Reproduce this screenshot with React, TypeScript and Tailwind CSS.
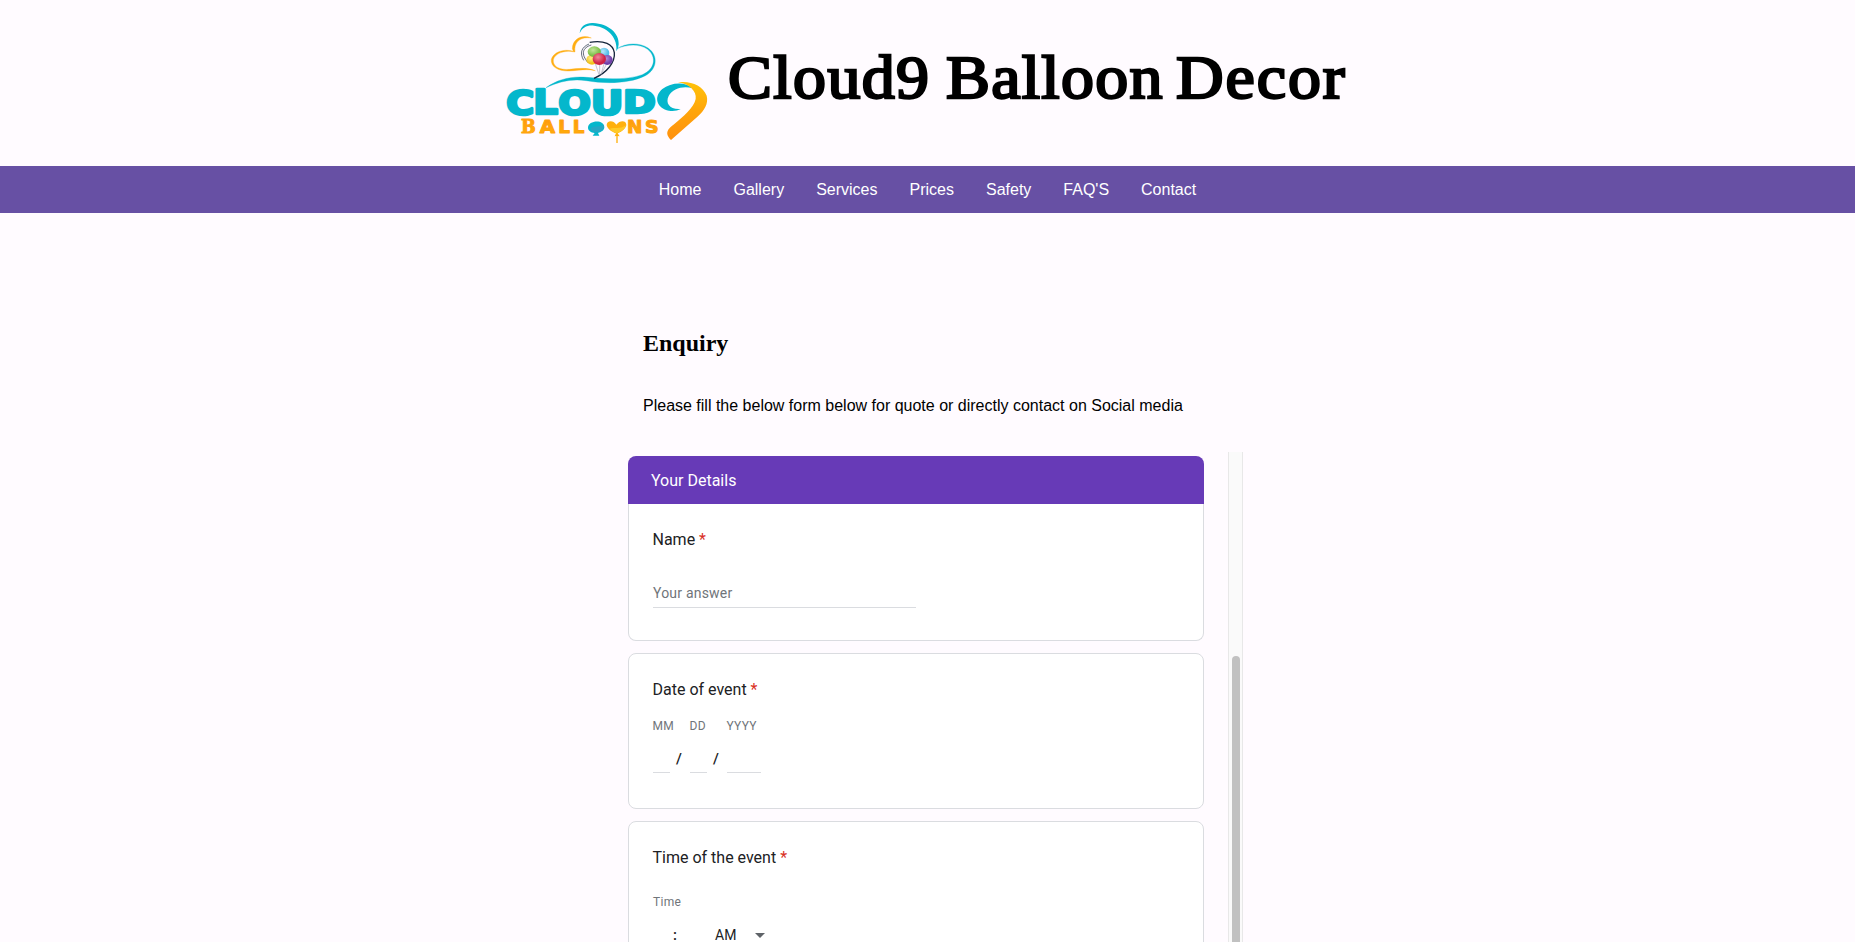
import React from "react";

const navItems = ["Home", "Gallery", "Services", "Prices", "Safety", "FAQ'S", "Contact"];

function Logo() {
  return (
    <svg viewBox="0 0 675 435" className="block h-[145px] w-[225px] shrink-0" aria-label="Cloud 9 Balloons">
      <defs>
        <linearGradient id="ribbon" x1="0" y1="0" x2="0" y2="1">
          <stop offset="0" stopColor="#ffc20a" />
          <stop offset="0.5" stopColor="#ffa50a" />
          <stop offset="1" stopColor="#ff900f" />
        </linearGradient>
        <linearGradient id="gold" x1="0" y1="0" x2="0" y2="1">
          <stop offset="0" stopColor="#ff960c" />
          <stop offset="1" stopColor="#ffb30c" />
        </linearGradient>
        <radialGradient id="green" cx="0.4" cy="0.35"><stop offset="0" stopColor="#c3e59a" /><stop offset="1" stopColor="#7cbf48" /></radialGradient>
        <radialGradient id="blue" cx="0.4" cy="0.35"><stop offset="0" stopColor="#b8e8fa" /><stop offset="1" stopColor="#53bde8" /></radialGradient>
        <radialGradient id="red" cx="0.4" cy="0.35"><stop offset="0" stopColor="#f0879a" /><stop offset="1" stopColor="#cf2345" /></radialGradient>
        <radialGradient id="purple" cx="0.4" cy="0.35"><stop offset="0" stopColor="#b48ad8" /><stop offset="1" stopColor="#7140a8" /></radialGradient>
        <radialGradient id="yellow" cx="0.4" cy="0.35"><stop offset="0" stopColor="#fff08a" /><stop offset="1" stopColor="#f2c21c" /></radialGradient>
      </defs>
      <path d="M254 70 C256 48 273 38 294 39 C341 41 373 70 371 103 C370 111 368 118 364 124 C369 88 343 52 297 47 C276 45 262 52 254 70Z" fill="#04b7cc" />
      <path d="M366 116 C391 99 432 96 459 114 C491 136 487 178 451 197 C405 221 332 222 274 212 C231 205 192 215 153 233 C188 208 228 198 275 202 C332 208 399 210 442 194 C480 178 486 141 458 118 C433 100 396 103 366 116Z" fill="#04b7cc" stroke="#04b7cc" strokeWidth="1" />
      <path d="M289 84 C263 72 232 86 232 116 L235 124 C205 114 174 128 169 148 C166 171 191 184 222 183 C253 181 276 176 301 182 C277 172 251 175 223 178 C192 180 173 169 175 149 C180 131 207 119 240 126 C236 98 254 79 289 84Z" fill="#ffad12" stroke="#ffad12" strokeWidth="1" />
      <path d="M284 97 C328 90 354 102 358 128 C361 157 336 188 297 205" fill="none" stroke="#17263c" strokeWidth="4" />
      <path d="M282 102 C258 112 254 130 266 151 M289 105 C262 113 257 132 279 158" fill="none" stroke="#17263c" strokeWidth="2" />
      <path d="M300 158 L312 194 M314 163 L314 194 M328 158 L318 194 M338 156 L321 188" fill="none" stroke="#a8abb8" strokeWidth="2" />
      <circle cx="327" cy="129" r="16" fill="url(#blue)" />
      <ellipse cx="291" cy="149" rx="17" ry="15" fill="url(#yellow)" />
      <ellipse cx="337" cy="150" rx="16" ry="15" fill="url(#purple)" />
      <ellipse cx="298" cy="125" rx="20" ry="16" fill="url(#green)" />
      <ellipse cx="313" cy="147" rx="20" ry="18" fill="url(#red)" />
      <g fontFamily="'DejaVu Sans', sans-serif" fontWeight="700" fill="#04b7cc" stroke="#04b7cc" strokeWidth="8" strokeLinejoin="round" fontSize="102">
        <text x="34" y="314" textLength="84" lengthAdjust="spacingAndGlyphs">C</text>
        <text x="115" y="313" textLength="74" lengthAdjust="spacingAndGlyphs">L</text>
        <text x="190" y="314" textLength="98" lengthAdjust="spacingAndGlyphs">O</text>
        <text x="287" y="314" textLength="98" lengthAdjust="spacingAndGlyphs">U</text>
        <text x="384" y="309" textLength="98" lengthAdjust="spacingAndGlyphs" fontSize="95">D</text>
      </g>
      <g fontFamily="'DejaVu Serif', serif" fontWeight="700" fill="url(#gold)" stroke="#ffa30c" strokeWidth="3" strokeLinejoin="round" fontSize="54">
        <text x="78" y="370" textLength="44" lengthAdjust="spacingAndGlyphs">B</text>
      </g>
      <g fontFamily="'DejaVu Sans', sans-serif" fontWeight="700" fill="url(#gold)" stroke="#ffa30c" strokeWidth="3" strokeLinejoin="round" fontSize="52">
        <text x="134" y="370" textLength="46" lengthAdjust="spacingAndGlyphs">A</text>
        <text x="190" y="370" textLength="35" lengthAdjust="spacingAndGlyphs">L</text>
        <text x="233" y="370" textLength="35" lengthAdjust="spacingAndGlyphs">L</text>
        <text x="396" y="370" textLength="46" lengthAdjust="spacingAndGlyphs">N</text>
        <text x="450" y="370" textLength="41" lengthAdjust="spacingAndGlyphs">S</text>
      </g>
      <path d="M279 353 C279 331 328 327 328 352 C328 361 318 367 309 369 L313 377 L293 377 L299 369 C288 367 279 362 279 353Z" fill="#04b7cc" />
      <path d="M287 354 C301 346 313 352 327 344 C328 358 315 366 302 367 C292 365 286 360 287 354Z" fill="#27a5c4" />
      <path d="M364 344 C355 329 335 331 335 345 C336 356 350 365 363 370 L359 379 L364 378 L364 399 L368 399 L368 378 L374 379 L368 370 C382 364 394 353 394 344 C393 330 374 331 364 344Z" fill="#ffb00d" />
      <path d="M344 356 C359 352 374 359 393 346 C390 359 377 366 365 370 C356 367 349 362 344 356Z" fill="#ffc928" />
      <path d="M593 235 C573 214 527 217 502 237 C474 261 486 296 522 302 C535 304 548 302 557 297 C525 300 510 280 521 258 C533 235 566 226 593 235Z" fill="#04b7cc" />
      <path d="M549 217 C585 211 624 226 635 257 C641 282 628 300 609 319 L528 390 C520 382 514 373 518 363 C520 356 529 349 538 342 C564 321 597 293 602 267 C606 244 582 221 549 217Z" fill="url(#ribbon)" />
    </svg>
  );
}

function Question({ title, className, children }: { title: string; className: string; children: React.ReactNode }) {
  return (
    <section className={`border-[#dadce0] bg-white px-6 ${className}`}>
      <h3 className="-ml-[0.5px] text-[16px] leading-6 font-normal text-[#202124]">
        {title} <span className="text-[#d93025]">*</span>
      </h3>
      {children}
    </section>
  );
}

function DatePart({ label, width }: { label: string; width: string }) {
  return (
    <div className={width}>
      <div className="-ml-[0.5px] h-4 text-[12px] leading-4 tracking-[0.3px] whitespace-nowrap text-[#70757a]">{label}</div>
      <div className="h-[39px] border-b border-[#dadce0]" />
    </div>
  );
}

export default function App() {
  return (
    <div className="flex h-[942px] w-full flex-col overflow-hidden bg-[#fffbff] font-['Liberation_Sans',Arial,sans-serif] text-black">
      <header className="flex h-[166px] shrink-0 pt-[10px] pl-[495px]">
        <Logo />
        <h1 className="mt-[26px] ml-[8px] flex text-[61px] leading-[84px] font-normal whitespace-nowrap font-['Liberation_Serif',serif] [-webkit-text-stroke:2.4px_black]">
          <span className="w-[218px] origin-left scale-x-[1.08] tracking-[1.3px]">Cloud9</span>
          <span className="w-[230px] origin-left scale-x-[1.08] tracking-[1.2px]">Balloon</span>
          <span className="origin-left scale-x-[1.08] tracking-[1.8px]">Decor</span>
        </h1>
      </header>

      <nav className="flex h-[47px] shrink-0 items-center justify-center gap-8 bg-[#6750a4] text-[16px] text-white">
        {navItems.map((item) => (
          <a key={item} href="#">{item}</a>
        ))}
      </nav>

      <main className="flex flex-col pl-[628px]">
        <h2 className="mt-[116px] ml-[15px] text-[24px] leading-7 font-bold font-['Liberation_Serif',serif]">Enquiry</h2>
        <p className="mt-[37px] ml-[15px] text-[16px] leading-6">
          Please fill the below form below for quote or directly contact on Social media
        </p>

        <div className="mt-[34px] flex h-[490px] w-[615px] justify-between overflow-hidden font-[Roboto,sans-serif]">
          <div className="w-[576px] pt-1">
            <div className="h-12 rounded-t-lg bg-[#673ab7] pl-[23px] text-[16px] leading-[49px] text-white">Your Details</div>
            <Question title="Name" className="h-[137px] rounded-b-lg border-x border-b pt-6">
              <div className="mt-[28px] h-[28px] w-[263px] border-b border-[#dadce0] text-[14px] leading-[26px] tracking-[0.2px] text-[#70757a]">
                Your answer
              </div>
            </Question>
            <Question title="Date of event" className="mt-3 h-[156px] rounded-lg border pt-6">
              <div className="mt-[16px] flex text-[16px] text-[#202124]">
                <DatePart label="MM" width="w-[17px]" />
                <span className="w-5 pt-[29px] pr-0.5 text-center text-[15px] leading-6 font-medium">/</span>
                <DatePart label="DD" width="w-[17px]" />
                <span className="w-5 pt-[29px] pr-0.5 text-center text-[15px] leading-6 font-medium">/</span>
                <DatePart label="YYYY" width="w-[34px]" />
              </div>
            </Question>
            <Question title="Time of the event" className="mt-3 h-[180px] rounded-lg border pt-6">
              <div className="mt-[24px] text-[12px] leading-4 tracking-[0.3px] text-[#70757a]">Time</div>
              <div className="mt-[13px] flex items-center text-[14px] leading-6 text-[#202124]">
                <span className="w-[62px] pl-[20px] text-[15px] font-medium">:</span>
                <span className="w-[40px]">AM</span>
                <svg viewBox="0 0 10 5" className="h-[5px] w-[10px]" fill="#5f6368"><path d="M0 0h10L5 5z" /></svg>
              </div>
            </Question>
          </div>
          <div className="w-[15px] border-x border-[#e8e8e8] bg-[#fafafa] pt-[204px] pl-[3px]">
            <div className="h-[400px] w-2 rounded-full bg-[#c1c1c1]" />
          </div>
        </div>
      </main>
    </div>
  );
}
